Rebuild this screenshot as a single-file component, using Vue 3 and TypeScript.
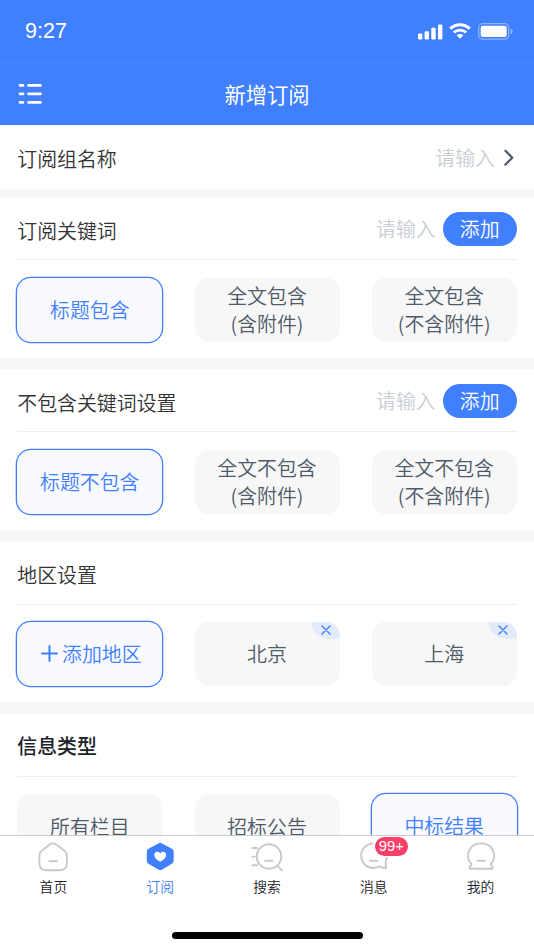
<script setup lang="ts">
interface Option {
  lines: string[]
  active?: boolean
  plus?: boolean
  removable?: boolean
}

interface Section {
  key: string
  title: string
  input?: boolean
  strong?: boolean
  options: Option[]
}

const sections: Section[] = [
  {
    key: 'include',
    title: '订阅关键词',
    input: true,
    options: [
      { lines: ['标题包含'], active: true },
      { lines: ['全文包含', '(含附件)'] },
      { lines: ['全文包含', '(不含附件)'] },
    ],
  },
  {
    key: 'exclude',
    title: '不包含关键词设置',
    input: true,
    options: [
      { lines: ['标题不包含'], active: true },
      { lines: ['全文不包含', '(含附件)'] },
      { lines: ['全文不包含', '(不含附件)'] },
    ],
  },
  {
    key: 'region',
    title: '地区设置',
    options: [
      { lines: ['添加地区'], active: true, plus: true },
      { lines: ['北京'], removable: true },
      { lines: ['上海'], removable: true },
    ],
  },
  {
    key: 'type',
    title: '信息类型',
    strong: true,
    options: [{ lines: ['所有栏目'] }, { lines: ['招标公告'] }, { lines: ['中标结果'], active: true }],
  },
]

const tabs = [
  { key: 'home', label: '首页' },
  { key: 'subscribe', label: '订阅' },
  { key: 'search', label: '搜索' },
  { key: 'message', label: '消息', badge: '99+' },
  { key: 'mine', label: '我的' },
]
</script>

<template>
  <div class="screen">
    <div class="status">
      <span class="time">9:27</span>
      <div class="indicators">
        <svg width="25" height="16" viewBox="0 0 25 16" fill="#fff">
          <rect x="0" y="9.6" width="4.4" height="6" rx="1.3" />
          <rect x="6.6" y="7.2" width="4.4" height="8.4" rx="1.3" />
          <rect x="13.3" y="3.8" width="4.4" height="11.8" rx="1.3" />
          <rect x="20" y="0.4" width="4.4" height="15.2" rx="1.3" />
        </svg>
        <svg class="wifi" width="22" height="16" viewBox="0 0 22 16" fill="none" stroke="#fff">
          <path d="M1.2 5.6C6.9 .4 15.1 .4 20.8 5.6" stroke-width="3" />
          <path d="M4.8 9.4C8.4 6.3 13.6 6.3 17.2 9.4" stroke-width="2.8" />
          <path d="M7.6 12.2Q11 9.6 14.4 12.2L11 15.7Z" fill="#fff" stroke="none" />
        </svg>
        <svg class="battery" width="35" height="17" viewBox="0 0 35 17">
          <rect x=".7" y=".7" width="30" height="15.4" rx="4" fill="none" stroke="#fff" stroke-opacity=".4" stroke-width="1.3" />
          <rect x="2.7" y="2.7" width="26" height="11.2" rx="2.2" fill="#fff" />
          <path d="M32.6 5.6Q34.6 6.3 34.6 8.4T32.6 11.2Z" fill="#fff" fill-opacity=".45" />
        </svg>
      </div>
    </div>

    <header class="nav">
      <svg class="menu" width="24" height="22" viewBox="0 0 24 22" stroke="#fff" stroke-width="2.9" stroke-linecap="round">
        <path d="M2.1 2.4H4.9M10.6 2.4H22.4M2.1 10.9H4.9M10.6 10.9H22.4M2.1 19.4H4.9M10.6 19.4H22.4" />
      </svg>
      <h1>新增订阅</h1>
    </header>

    <main class="content">
      <div class="group-name">
        <span class="label">订阅组名称</span>
        <span class="hint">请输入</span>
        <svg width="10" height="18" viewBox="0 0 10 18" fill="none" stroke="#4e5969" stroke-width="2.2" stroke-linecap="round" stroke-linejoin="round">
          <path d="M1.4 2.8L8.3 9.7L1.4 16.6" />
        </svg>
      </div>

      <section v-for="section in sections" :key="section.key" class="section">
        <div class="section-head">
          <h2 class="label" :class="{ strong: section.strong }">{{ section.title }}</h2>
          <template v-if="section.input">
            <span class="hint">请输入</span>
            <button class="add" type="button">添加</button>
          </template>
        </div>
        <div class="options">
          <div v-for="(option, i) in section.options" :key="i" class="option" :class="{ active: option.active }">
            <svg v-if="option.plus" class="plus" width="17" height="17" viewBox="0 0 17 17" stroke="#4080ff" stroke-width="2" stroke-linecap="round">
              <path d="M1 8.5H16M8.5 1V16" />
            </svg>
            <div>
              <div v-for="line in option.lines" :key="line">{{ line }}</div>
            </div>
            <span v-if="option.removable" class="remove">
              <svg width="10" height="10" viewBox="0 0 10 10" stroke="#4080ff" stroke-width="1.4" stroke-linecap="round">
                <path d="M1 1L9 9M9 1L1 9" />
              </svg>
            </span>
          </div>
        </div>
      </section>
    </main>

    <footer class="footer">
      <nav class="tabs">
        <div v-for="tab in tabs" :key="tab.key" class="tab" :class="{ current: tab.key === 'subscribe' }">
          <div class="icon">
            <svg width="36" height="32" viewBox="0 0 36 32" fill="none" stroke="#c9c9c9" stroke-width="1.9" stroke-linecap="round" stroke-linejoin="round">
              <template v-if="tab.key === 'home'">
                <path d="M14.7 2.6Q18 .2 21.3 2.6L29.4 8.8Q31.9 10.7 31.9 13.8V21.3Q31.9 28.2 25 28.2H11.4Q4.4 28.2 4.4 21.3V13.8Q4.4 10.7 6.8 8.8Z" />
                <path d="M14.4 19.2H22" />
              </template>
              <template v-else-if="tab.key === 'subscribe'">
                <path d="M16.2 1.4Q18.2 .3 20.2 1.4L29.9 6.8Q31.7 7.8 31.7 9.8V18.8Q31.7 20.8 29.9 21.8L20.2 27.5Q18.2 28.6 16.2 27.5L6.5 21.8Q4.8 20.8 4.8 18.8V9.8Q4.8 7.8 6.5 6.8Z" fill="#4080ff" stroke="none" />
                <path d="M18.2 19.8C14.8 17.8 12.3 15.6 12.3 12.9C12.3 9.6 16.3 8.6 18.2 11.5C20.1 8.6 24.1 9.6 24.1 12.9C24.1 15.6 21.6 17.8 18.2 19.8Z" fill="#fff" stroke="none" />
              </template>
              <template v-else-if="tab.key === 'search'">
                <circle cx="20" cy="14.5" r="12.2" />
                <path d="M16.2 18.8H23.4M28.6 23.8L33 28.4M3.4 6H8M3.4 14.6H6M3.4 23.3H8" />
              </template>
              <template v-else-if="tab.key === 'message'">
                <path d="M16.4 1.5A12.4 12.3 0 0 0 16.4 26Q20.4 26.2 23.6 24.2Q26.4 26.4 30.4 25.8Q28.6 21.6 30.8 15.6" />
                <path d="M13.8 18.8H21.2" />
              </template>
              <template v-else>
                <path d="M8.6 22.4C1.4 14.2 5.8 1.4 18.1 1.4C30.4 1.4 34.8 14.2 27.6 22.4Q29.4 23.6 29.6 26.8H6.6Q6.8 23.6 8.6 22.4Z" />
                <path d="M14.6 18.8H21.8" />
              </template>
            </svg>
            <span v-if="tab.badge" class="badge">{{ tab.badge }}</span>
          </div>
          <span class="tab-label">{{ tab.label }}</span>
        </div>
      </nav>
      <div class="home-bar"></div>
    </footer>
  </div>
</template>

<style>
body {
  margin: 0;
  overflow: hidden;
}
</style>

<style scoped>
.screen {
  display: flex;
  flex-direction: column;
  box-sizing: border-box;
  width: 534px;
  height: 950px;
  overflow: hidden;
  background: #f7f7f7;
  font-family: 'Noto Sans CJK SC', sans-serif;
  font-weight: 350;
  font-size: 19.9px;
  color: #333;
}

.status {
  flex: none;
  display: flex;
  align-items: center;
  justify-content: space-between;
  box-sizing: border-box;
  height: 63px;
  padding: 0 21px 0 25px;
  border-bottom: 1px solid #4c88ff;
  background: #4080ff;
}

.time {
  font-family: 'Liberation Sans', sans-serif;
  font-size: 21.5px;
  font-weight: 400;
  line-height: 24px;
  color: #fff;
}

.indicators {
  display: flex;
  align-items: center;
  padding-top: 1px;
}

.wifi {
  margin: 0 7px 2px 6px;
}

.nav {
  flex: none;
  display: grid;
  grid-template-columns: 60px 1fr 60px;
  align-items: center;
  height: 62.4px;
  background: #4080ff;
}

.menu {
  margin-left: 18px;
}

h1 {
  margin: 0;
  font-size: 21.3px;
  font-weight: 400;
  line-height: 30px;
  text-align: center;
  color: #fff;
}

.content {
  flex: 1;
  min-height: 0;
  overflow: hidden;
}

.group-name {
  display: flex;
  align-items: center;
  height: 63.6px;
  padding: 0 20px 0 17.3px;
  background: #fff;
}

.label {
  margin: 0 auto 0 0;
  padding-top: 3px;
  font-size: 19.9px;
  font-weight: 350;
  line-height: 30px;
}

.section .label {
  padding-top: 4.5px;
}

.section .strong {
  padding-top: 3px;
  font-weight: 500;
  color: #1d2129;
}

.hint {
  padding-top: 1px;
  line-height: 30px;
  color: #c9cdd4;
}

.section .hint {
  padding-top: 2px;
}

.group-name .hint {
  margin-right: 9px;
}

.section {
  height: 160.6px;
  margin-bottom: 11.6px;
  background: #fff;
}

.group-name + .section {
  margin-top: 8.3px;
}

.section-head {
  display: flex;
  align-items: center;
  box-sizing: border-box;
  height: 63px;
  margin: 0 17.3px;
  border-bottom: 1px solid #eeeeef;
}

.add {
  width: 74px;
  height: 34px;
  margin: 1px 0 0 7px;
  padding: 0;
  border: 0;
  border-radius: 17px;
  background: #4080ff;
  font: inherit;
  line-height: 34px;
  color: #fff;
}

.options {
  display: grid;
  grid-template-columns: repeat(3, 145px);
  justify-content: space-between;
  padding: 17.3px 17.3px 0;
}

.option {
  position: relative;
  display: flex;
  align-items: center;
  justify-content: center;
  box-sizing: border-box;
  height: 64px;
  padding-top: 1px;
  border-radius: 14px;
  background: #f7f7f7;
  line-height: 28px;
  text-align: center;
  color: #4e5969;
}

.option.active {
  padding-top: 0;
  background: #f9faff;
  box-shadow: 0 0 0 1.3px #4080ff;
  color: #4080ff;
}

.plus {
  margin: 0 4px 0 3px;
}

.remove {
  position: absolute;
  top: 0;
  right: 0;
  display: flex;
  align-items: center;
  justify-content: center;
  width: 28px;
  height: 17px;
  border-radius: 0 14px 10px 20px / 0 15px 2px 16px;
  background: #e3ebfa;
}

.footer {
  flex: none;
  height: 115px;
  background: #fff;
}

.tabs {
  display: grid;
  grid-template-columns: repeat(5, 1fr);
  height: 66px;
  border-top: 1px solid #ccc;
}

.tab {
  display: flex;
  flex-direction: column;
  align-items: center;
  padding-top: 6px;
  font-size: 13.8px;
  font-weight: 350;
  color: #1d2129;
}

.current {
  color: #4080ff;
}

.icon {
  position: relative;
  height: 32px;
}

.icon svg {
  display: block;
}

.tab-label {
  margin-top: 2px;
  line-height: 20px;
}

.badge {
  position: absolute;
  top: -5px;
  left: 19px;
  width: 33px;
  height: 19px;
  border-radius: 10px;
  background: #f93e67;
  box-shadow: 0 0 0 1px #fff;
  font-family: 'Liberation Sans', sans-serif;
  font-size: 14.8px;
  font-weight: 400;
  line-height: 19px;
  text-align: center;
  color: #fff;
}

.home-bar {
  width: 191px;
  height: 7px;
  margin: 29.5px auto 0;
  border-radius: 4px;
  background: #000;
}
</style>
